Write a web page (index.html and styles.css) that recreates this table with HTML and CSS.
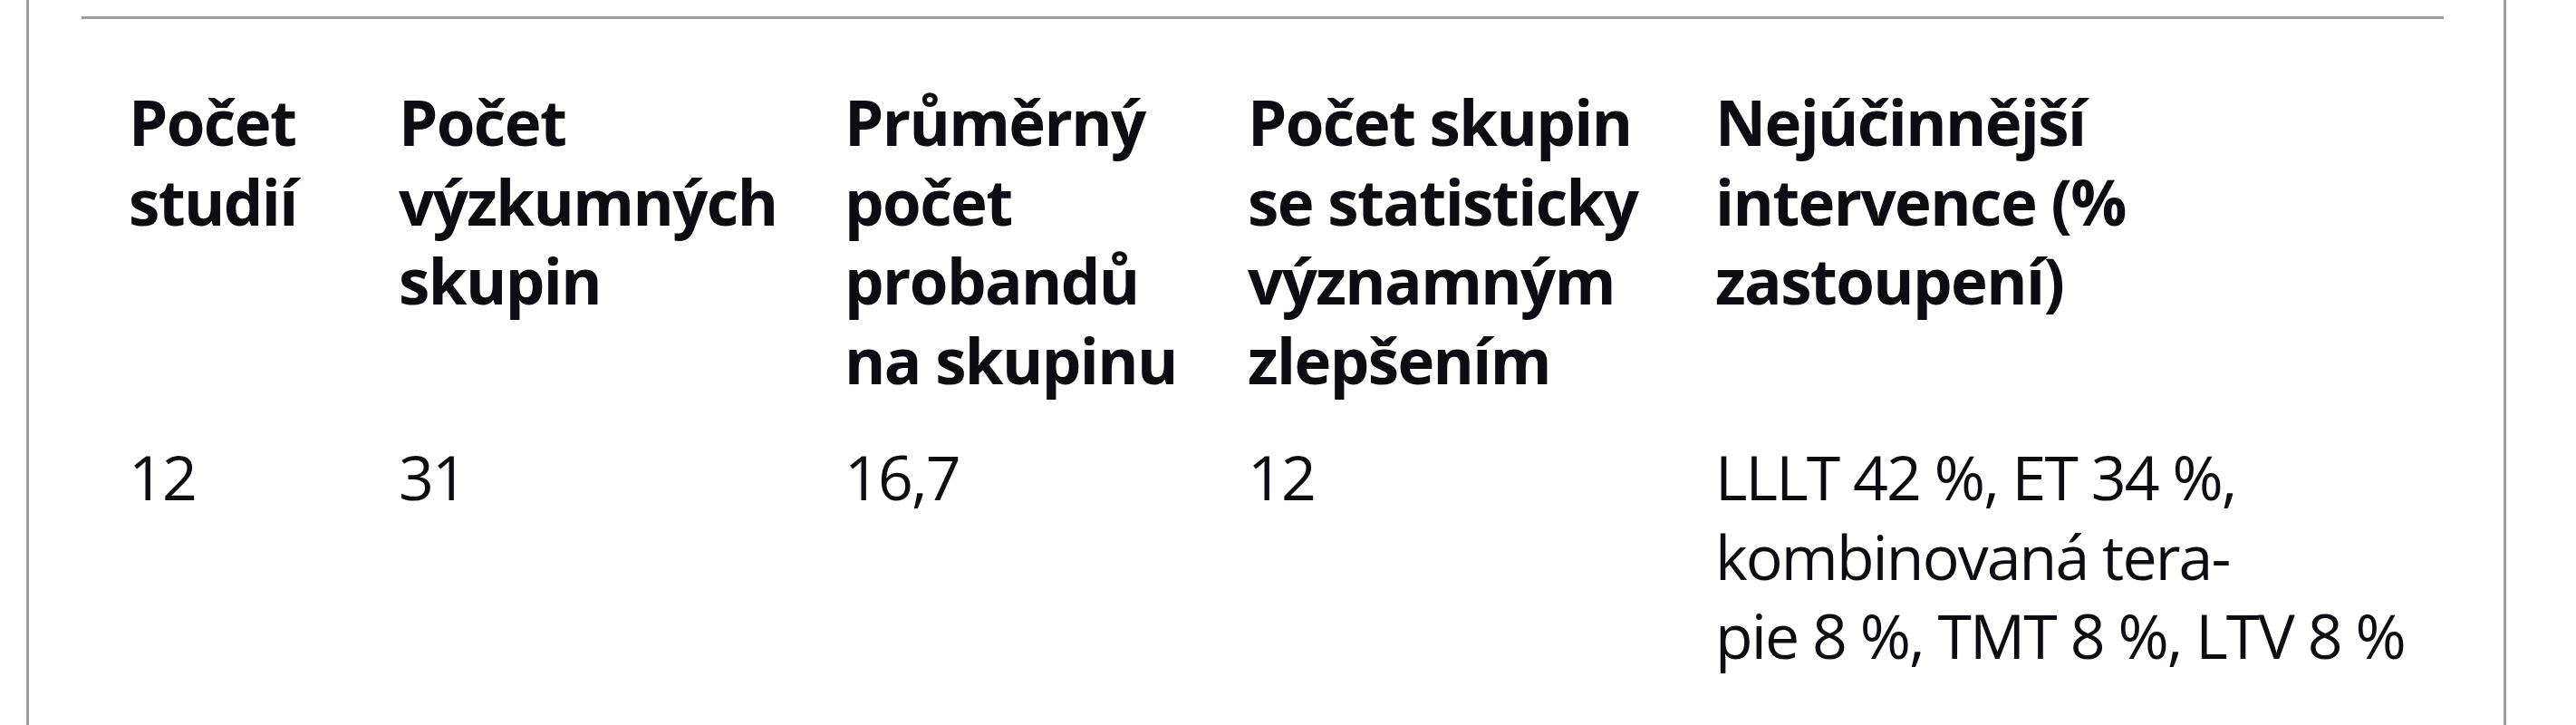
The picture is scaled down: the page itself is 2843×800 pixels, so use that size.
FILE: index.html
```html
<!DOCTYPE html>
<html lang="cs">
<head>
<meta charset="utf-8">
<title>Tabulka</title>
<link rel="stylesheet" href="styles.css">
</head>
<body>
<div class="frame">
  <div class="table">
    <div class="cell head">Počet<br>studií</div>
    <div class="cell head">Počet<br>výzkumných<br>skupin</div>
    <div class="cell head">Průměrný<br>počet<br>probandů<br>na skupinu</div>
    <div class="cell head">Počet skupin<br>se statisticky<br>významným<br>zlepšením</div>
    <div class="cell head">Nejúčinnější<br>intervence (%<br>zastoupení)</div>

    <div class="cell body">12</div>
    <div class="cell body">31</div>
    <div class="cell body">16,7</div>
    <div class="cell body">12</div>
    <div class="cell body">LLLT 42 %, ET 34 %,<br>kombinovaná tera-<br>pie 8 %, TMT 8 %, LTV 8 %</div>
  </div>
</div>
</body>
</html>
```

FILE: styles.css
```css
html, body {
  margin: 0;
  padding: 0;
  background: #ffffff;
}

.frame {
  box-sizing: border-box;
  margin-left: 29px;
  width: 2737px;
  height: 800px;
  border-left: 3px solid #9d9d9d;
  border-right: 3px solid #9d9d9d;
  padding-top: 18px;
  overflow: hidden;
}

.table {
  margin-left: 58px;
  width: 2607px;
  border-top: 3px solid #9d9d9d;
  display: grid;
  grid-template-columns: 298px 492px 445px 516px auto;
  padding-left: 52px;
  box-sizing: border-box;
  color: #0c0c12;
  font-family: "Open Sans", "Noto Sans", "Liberation Sans", sans-serif;
  line-height: 87.5px;
  white-space: nowrap;
}

.cell.head {
  font-weight: 700;
  font-size: 69px;
  letter-spacing: -1.6px;
  padding-top: 70px;
  padding-bottom: 40px;
}

.cell.body {
  font-weight: 400;
  font-size: 68px;
  letter-spacing: -1.9px;
  padding-top: 1px;
}
```
